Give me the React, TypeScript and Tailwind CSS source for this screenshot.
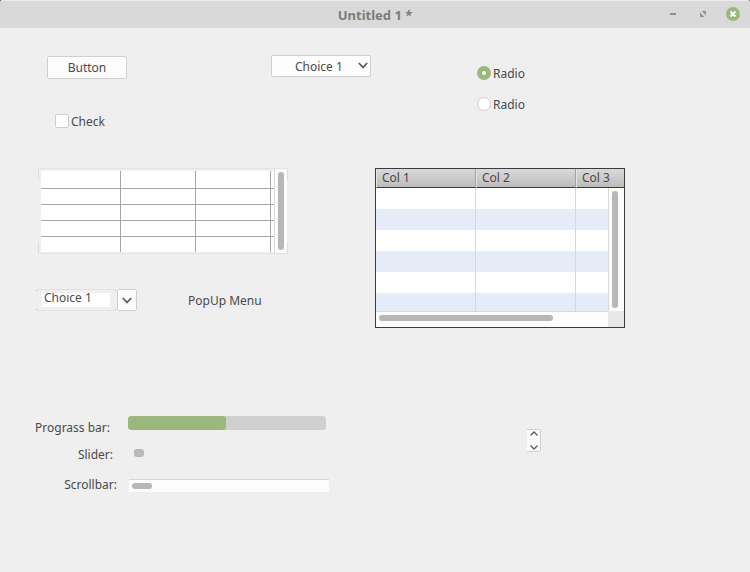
import { useState } from 'react';

const columns = ['Col 1', 'Col 2', 'Col 3'];

const rowHeights = ['h-[18px]', 'h-4', 'h-4', 'h-4', 'h-[15px]'];

const Chevron = ({ up = false }: { up?: boolean }) => (
  <svg width="10" height="7" viewBox="0 0 10 7" fill="none" stroke="#5c5c5c" strokeWidth="1.7" aria-hidden="true">
    <path d={up ? 'M0.8 5.6 5 1.4 9.2 5.6' : 'M0.8 1 5 5.4 9.2 1'} />
  </svg>
);

const SmallChevron = ({ up = false }: { up?: boolean }) => (
  <svg width="8" height="5" viewBox="0 0 8 5" fill="none" stroke="#5c5c5c" strokeWidth="1.3" aria-hidden="true">
    <path d={up ? 'M0.5 4.5 4 1 7.5 4.5' : 'M0.5 0.5 4 4 7.5 0.5'} />
  </svg>
);

// Frame side that only shows near the corners
const FrameSide = ({ size }: { size: 'sm' | 'lg' }) => {
  const end = size === 'lg' ? 'h-[11px] bg-[#dedede]' : 'h-0.5 bg-[#d0d0d0]';
  return (
    <div className="flex w-px shrink-0 flex-col justify-between">
      <div className={end} />
      <div className={end} />
    </div>
  );
};

const TitleBar = () => (
  <div className="bg-[#3c3c3c]">
    <header className="grid h-7 grid-cols-[1fr_auto_1fr] items-center rounded-t-[2px] border-t border-[#ededed] bg-[#d9d9d9]">
      <h1 className="col-start-2 text-[13px] leading-5 font-bold text-[#7c7c7c]">Untitled 1 *</h1>
      <div className="flex items-center justify-end gap-4 pr-[10px] pb-px">
        <button aria-label="Minimize">
          <svg width="14" height="14" viewBox="0 0 14 14" className="block">
            <path d="M4 6h6v2H4z" fill="#8f8f8f" />
          </svg>
        </button>
        <button aria-label="Maximize">
          <svg width="14" height="14" viewBox="0 0 14 14" fill="#929292" className="block">
            <path d="M5.6 4H10v4.4zM4 5.6V10h4.4z" />
          </svg>
        </button>
        <button aria-label="Close">
          <svg width="14" height="14" viewBox="0 0 14 14" className="block">
            <circle cx="7" cy="7" r="7" fill="#9ab87c" />
            <path d="M4.5 4.5l5 5M9.5 4.5l-5 5" stroke="#fff" strokeWidth="1.8" />
          </svg>
        </button>
      </div>
    </header>
  </div>
);

const GridView = () => (
  <div className="flex h-[86px] w-[250px] border-y border-[#e3e3e3]">
    <FrameSide size="lg" />
    <div className="flex-1 pt-0.5 pl-0.5">
      <table className="w-full table-fixed border-separate border-spacing-0 bg-white">
        <colgroup>
          <col className="w-20" />
          <col className="w-[75px]" />
          <col className="w-[75px]" />
          <col />
        </colgroup>
        <tbody>
          {rowHeights.map((height, row) => (
            <tr key={row}>
              {[0, 1, 2, 3].map((col) => (
                <td
                  key={col}
                  className={`p-0 border-[#a6a6a6] ${height} ${col < 3 ? 'border-r' : ''} ${row < 4 ? 'border-b' : ''}`}
                />
              ))}
            </tr>
          ))}
        </tbody>
      </table>
    </div>
    <div className="w-[13px] border-l border-[#dcdcdc] bg-[#fcfcfc] py-[3px] pl-[3px]">
      <div className="h-full w-1.5 rounded-full bg-[#b7b7b7]" />
    </div>
    <FrameSide size="lg" />
  </div>
);

const ListView = () => (
  <div className="relative w-[250px] border border-[#3c3c3c] bg-[#fcfcfc]">
    <div className="h-[142px] overflow-hidden">
      <table className="w-full table-fixed border-separate border-spacing-0 text-left">
        <colgroup>
          <col className="w-[100px]" />
          <col className="w-[100px]" />
          <col />
        </colgroup>
        <thead>
          <tr>
            {columns.map((name, i) => (
              <th
                key={name}
                className={`h-[19px] border-b border-b-[#3c3c3c] bg-linear-to-b from-[#dadada] to-[#bcbcbc] p-0 pl-[5px] leading-[18px] font-normal border-l border-l-[#e6e6e6] ${
                  i < 2 ? 'border-r border-r-[#a3a3a3]' : ''
                }`}
              >
                {name}
              </th>
            ))}
          </tr>
        </thead>
        <tbody>
          {[0, 1, 2, 3, 4, 5].map((row) => (
            <tr key={row} className="bg-white even:bg-[#e6ecf7]">
              {columns.map((name, i) => (
                <td key={name} className={`h-[21px] p-0 ${i < 2 ? 'border-r border-[#d8d8d8]' : ''}`} />
              ))}
            </tr>
          ))}
        </tbody>
      </table>
    </div>
    <div className="flex h-4">
      <div className="flex-1 border-t border-[#d8d8d8] pt-[3px] pl-[3px]">
        <div className="h-1.5 w-[174px] rounded-full bg-[#b7b7b7]" />
      </div>
      <div className="w-4 bg-[#e8e8e8]" />
    </div>
    {/* vertical scrollbar lies over the rows */}
    <div className="absolute top-[19px] right-0 bottom-4 w-4 border-l border-[#d8d8d8] bg-[#fcfcfc] py-[3px] pl-[3px]">
      <div className="h-full w-1.5 rounded-full bg-[#b7b7b7]" />
    </div>
  </div>
);

export default function App() {
  const [checked, setChecked] = useState(false);
  const [radio, setRadio] = useState(0);
  const [text, setText] = useState('Choice 1');
  const [slider, setSlider] = useState(0);
  const progress = 49.5;

  return (
    <div className="min-h-screen bg-[#efefef] font-['Noto_Sans',sans-serif] text-[12px] leading-4 text-[#4a4a4a]">
      <TitleBar />
      <main>
        <section className="grid grid-cols-[271fr_206fr_273fr] pb-10">
          <div className="flex flex-col items-start gap-[35px] pt-7 pl-[47px]">
            <button className="h-[23px] w-20 rounded-[2px] border border-[#cfcfcf] bg-[#fcfdfc]">Button</button>
            <label className="ml-2 flex h-[14px] items-start gap-0.5">
              <input
                type="checkbox"
                checked={checked}
                onChange={(e) => setChecked(e.target.checked)}
                className="size-[14px] appearance-none rounded-[2px] border border-[#cfcfcf] bg-white checked:bg-[#9ab87c]"
              />
              Check
            </label>
          </div>
          <div className="pt-[27px]">
            <div className="relative w-[100px]">
              <select
                aria-label="Choice"
                className="block h-[22px] w-full appearance-none rounded-[2px] border border-[#cfcfcf] bg-[#fcfdfc] pt-0.5 pl-[23px]"
              >
                <option>Choice 1</option>
              </select>
              <span className="pointer-events-none absolute top-[7px] right-[3px]">
                <Chevron />
              </span>
            </div>
          </div>
          <div className="flex flex-col items-start gap-[17px] pt-[38px]">
            {[0, 1].map((n) => (
              <label key={n} className="flex h-[14px] items-start gap-0.5">
                <input
                  type="radio"
                  name="radio"
                  checked={radio === n}
                  onChange={() => setRadio(n)}
                  className="size-[14px] appearance-none rounded-full border border-[#cfcfcf] bg-white checked:border-5 checked:border-[#9ab87c]"
                />
                Radio
              </label>
            ))}
          </div>
        </section>

        <section className="grid grid-cols-2">
          <div className="pl-9">
            <div className="pl-0.5">
              <GridView />
            </div>
            <div className="mt-[35px] flex items-center">
              <div className="flex h-[22px] w-20 border-y border-[#e0e0e0]">
                <FrameSide size="sm" />
                <div className="flex-1 px-[5px] py-[3px]">
                  <input
                    aria-label="Combo box"
                    value={text}
                    onChange={(e) => setText(e.target.value)}
                    className="block h-[14px] w-full bg-white pb-1.5 pl-0.5 leading-[8px] outline-none"
                  />
                </div>
                <FrameSide size="sm" />
              </div>
              <button
                aria-label="Open choices"
                className="ml-px flex h-[22px] w-5 items-center justify-center rounded-[2px] border border-[#cfcfcf] bg-[#fcfdfc]"
              >
                <Chevron />
              </button>
              <button className="ml-[51px] pt-0.5">PopUp Menu</button>
            </div>
          </div>
          <ListView />
        </section>

        <section className="grid grid-cols-[527fr_223fr] pt-[88px]">
          <div>
            <div className="flex items-start">
              <span id="progress-label" className="w-[117px] pt-1 pr-[7px] text-right">
                Prograss bar:
              </span>
              <div
                role="progressbar"
                aria-labelledby="progress-label"
                aria-valuenow={progress}
                className="ml-[11px] h-[14px] w-[198px] overflow-hidden rounded-[3px] bg-[#cfcfcf]"
              >
                <div className="h-full rounded-[3px] bg-[#9ab87c]" style={{ width: `${progress}%` }} />
              </div>
            </div>
            <div className="mt-[11px] flex items-start">
              <label htmlFor="slider" className="w-[117px] pr-1 text-right">
                Slider:
              </label>
              <input
                id="slider"
                type="range"
                value={slider}
                onChange={(e) => setSlider(Number(e.target.value))}
                className="mt-0.5 ml-[17px] h-2 w-[190px] appearance-none bg-transparent [&::-webkit-slider-thumb]:h-2 [&::-webkit-slider-thumb]:w-[10px] [&::-webkit-slider-thumb]:appearance-none [&::-webkit-slider-thumb]:rounded-[3px] [&::-webkit-slider-thumb]:bg-[#b9b9b9]"
              />
            </div>
            <div className="mt-[14px] flex items-center">
              <span id="scrollbar-label" className="w-[117px] text-right">
                Scrollbar:
              </span>
              <div
                role="scrollbar"
                aria-labelledby="scrollbar-label"
                aria-controls="scrollbar-label"
                aria-valuenow={0}
                className="ml-3 h-[13px] w-[200px] border-t border-[#d6d6d6] bg-[#fcfcfc] pt-[3px] pl-[3px]"
              >
                <div className="h-1.5 w-5 rounded-full bg-[#b7b7b7]" />
              </div>
            </div>
          </div>
          <div className="pt-[13px]">
            <div className="flex h-[23px] w-[14px] flex-col justify-between rounded-r-[2px] border border-l-0 border-[#cfcfcf] bg-[#fcfdfc] py-px pl-px">
              <button aria-label="Increase" className="flex justify-center">
                <SmallChevron up />
              </button>
              <button aria-label="Decrease" className="flex justify-center">
                <SmallChevron />
              </button>
            </div>
          </div>
        </section>
      </main>
    </div>
  );
}
